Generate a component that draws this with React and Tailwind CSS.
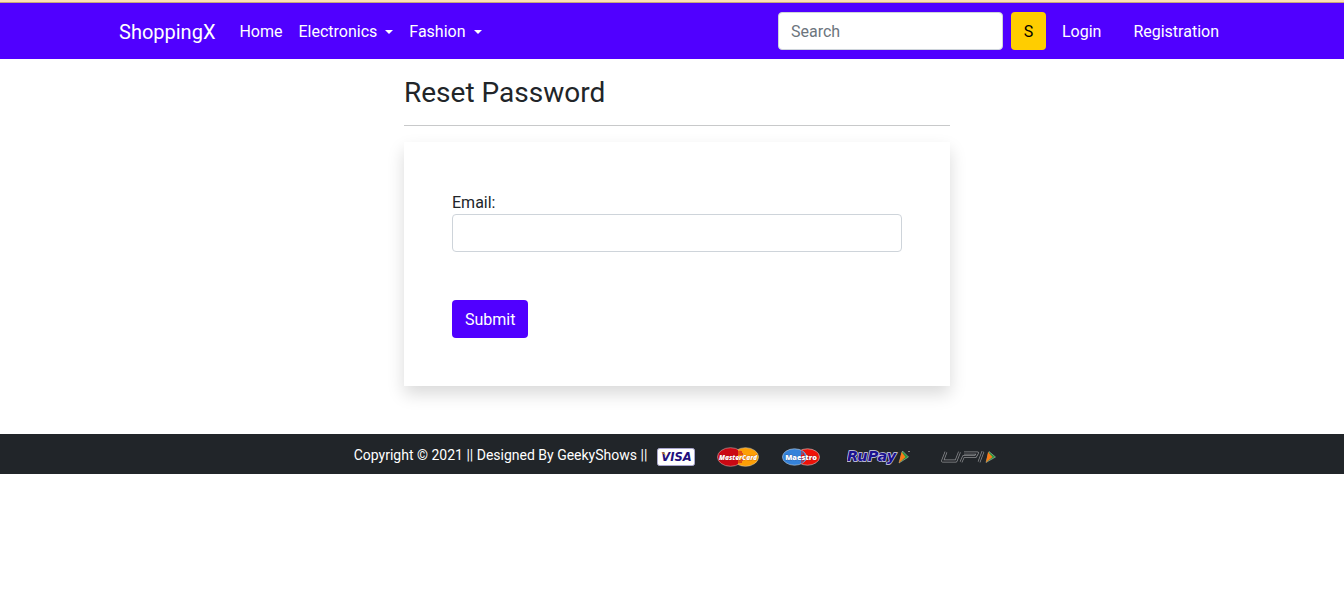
import React from "react";

const navLink = "flex items-center gap-2 px-2 pt-2.5 pb-2 text-base leading-[22px] text-white";
const accountLink = "px-4 pt-2.5 pb-2 text-base leading-[22px] text-white";

function Caret() {
  return (
    <svg width="8" height="4" viewBox="0 0 8 4" aria-hidden="true">
      <path d="M0 0h8L4 4z" fill="currentColor" />
    </svg>
  );
}

function VisaLogo() {
  return (
    <svg width="38" height="20" viewBox="0 0 38 20" role="img" aria-label="Visa">
      <rect x="0.5" y="1.5" width="37" height="17" rx="2" fill="#fff" stroke="#a9a6cf" />
      <text x="19.5" y="14" textAnchor="middle" fontFamily="DejaVu Sans, sans-serif" fontSize="11.5" fontWeight="700" fontStyle="italic" fill="#22107c">VISA</text>
      <path d="M4 5.5h3.500l1.500 4C8 7.500 6.500 6.300 4 5.500z" fill="#e6a01e" />
    </svg>
  );
}

function MasterCardLogo() {
  return (
    <svg width="42" height="20" viewBox="0 0 42 20" role="img" aria-label="MasterCard">
      <ellipse cx="28.500" cy="10" rx="13" ry="9.300" fill="#fd9f06" stroke="#d8c9a5" strokeWidth="0.600" />
      <ellipse cx="13.500" cy="10" rx="13" ry="9.300" fill="#cb0813" stroke="#d9a9a6" strokeWidth="0.600" />
      <path d="M21 2.400c7 4 7 11.200 0 15.200z" fill="#fd9f06" />
      <path d="M21 5h4M21 7h5M21 13h5M21 15h4" stroke="#cb0813" />
      <text x="21" y="12.500" textAnchor="middle" fontFamily="Open Sans, sans-serif" fontSize="6.600" fontWeight="800" fontStyle="italic" fill="#fff" stroke="#8b2022" strokeWidth="0.300" paintOrder="stroke">MasterCard</text>
    </svg>
  );
}

function MaestroLogo() {
  return (
    <svg width="38" height="20" viewBox="0 0 38 20" role="img" aria-label="Maestro">
      <ellipse cx="25.500" cy="10" rx="12" ry="8.200" fill="#ee1208" stroke="#d5b0ae" strokeWidth="0.700" />
      <ellipse cx="12.500" cy="10" rx="12" ry="8.200" fill="#3482da" stroke="#a8bfd6" strokeWidth="0.700" />
      <path d="M19 3.200c5 3.600 5 10 0 13.600z" fill="#ee1208" />
      <path d="M17 5h4M15 7h6M15 13h6M17 15h4" stroke="#3482da" />
      <text x="19" y="12.500" textAnchor="middle" fontFamily="Open Sans, sans-serif" fontSize="7.400" fontWeight="800" fill="#fff" stroke="#34406b" strokeWidth="0.300" paintOrder="stroke">Maestro</text>
    </svg>
  );
}

function RuPayLogo() {
  return (
    <svg width="64" height="20" viewBox="0 0 64 20" role="img" aria-label="RuPay">
      <text x="0" y="14" fontFamily="DejaVu Sans, sans-serif" fontSize="14.500" fontWeight="700" fontStyle="italic" fill="#1c1290" stroke="#d4d4ee" strokeWidth="1.400" paintOrder="stroke">RuPay</text>
      <path d="M55.500 4l6 6-9.500 6z" fill="#23983f" stroke="#c4c4c4" strokeWidth="0.500" />
      <path d="M54.500 5l4 5-6.500 6z" fill="#f97b18" />
      <path d="M61 4.500h2" stroke="#8a8a8a" />
    </svg>
  );
}

function UpiLogo() {
  return (
    <svg width="60" height="20" viewBox="0 0 60 20" role="img" aria-label="UPI">
      <g fill="none" strokeLinejoin="round">
        <path d="M6 5L2.500 14H16L19.500 5M21 15l2.500-5.500h12L37.500 6H24M43 4.500L39 15" stroke="#8d8f92" strokeWidth="2.800" />
        <path d="M6 5L2.500 14H16L19.500 5M21 15l2.500-5.500h12L37.500 6H24M43 4.500L39 15" stroke="#24272b" strokeWidth="1.400" />
      </g>
      <path d="M49 4.500l6.500 5.500-9.500 5.500z" fill="#23983f" stroke="#c4c4c4" strokeWidth="0.500" />
      <path d="M48 5l4.500 5-6.500 5.500z" fill="#f97b18" />
    </svg>
  );
}

export default function App() {
  return (
    <div className="font-[Roboto,sans-serif] text-[#212529]">
      <div className="h-[3px] border-b border-[#c9a878] bg-[#fde0b5]" />
      <nav className="bg-[#5000ff] py-2 pl-[10px]">
        <div className="mx-auto flex max-w-[1140px] items-center px-3">
          <a href="#" className="mr-4 pt-0.5 text-xl leading-[30px] text-white">ShoppingX</a>
          <div className="flex">
            <a href="#" className={navLink}>Home</a>
            <button type="button" className={navLink}>Electronics <Caret /></button>
            <button type="button" className={navLink}>Fashion <Caret /></button>
          </div>
          <form className="ml-auto flex gap-2">
            <input type="search" aria-label="Search" placeholder="Search" className="h-[38px] w-[225px] self-center rounded border border-[#ced4da] bg-white px-3 text-base text-[#212529] placeholder:text-[#6c757d]" />
            <button type="submit" className="h-[38px] w-[35px] rounded bg-[#ffcd00] pt-0.5 text-base text-black">S</button>
          </form>
          <div className="flex">
            <a href="#" className={accountLink}>Login</a>
            <a href="#" className={accountLink}>Registration</a>
          </div>
        </div>
      </nav>
      <main className="pb-12 pl-[10px]">
        <div className="mx-auto w-full max-w-[546px]">
          <h1 className="pt-[18px] text-[28px] leading-8">Reset Password</h1>
          <hr className="my-4 border-[#c8c9ca]" />
          <form className="bg-white p-12 shadow-[0_8px_16px_rgba(0,0,0,0.15)]">
            <label htmlFor="email" className="block pt-0.5 text-base leading-[22px]">Email:</label>
            <input id="email" type="email" className="h-[38px] w-full rounded border border-[#ced4da] bg-white px-3 text-base" />
            <button type="submit" className="mt-12 block h-[38px] rounded bg-[#5000ff] px-[13px] pt-0.5 text-base text-white">Submit</button>
          </form>
        </div>
      </main>
      <footer className="flex h-10 items-center justify-center bg-[#212529] pt-1.5 pl-[10px] text-white">
        <small className="pb-1 text-sm leading-5">Copyright © 2021 || Designed By GeekyShows ||</small>
        <div className="flex items-center pl-[10px]">
          <VisaLogo />
          <div className="pl-[22px]"><MasterCardLogo /></div>
          <div className="pl-[23px]"><MaestroLogo /></div>
          <div className="pl-[27px]"><RuPayLogo /></div>
          <div className="pl-[29px]"><UpiLogo /></div>
        </div>
      </footer>
    </div>
  );
}
